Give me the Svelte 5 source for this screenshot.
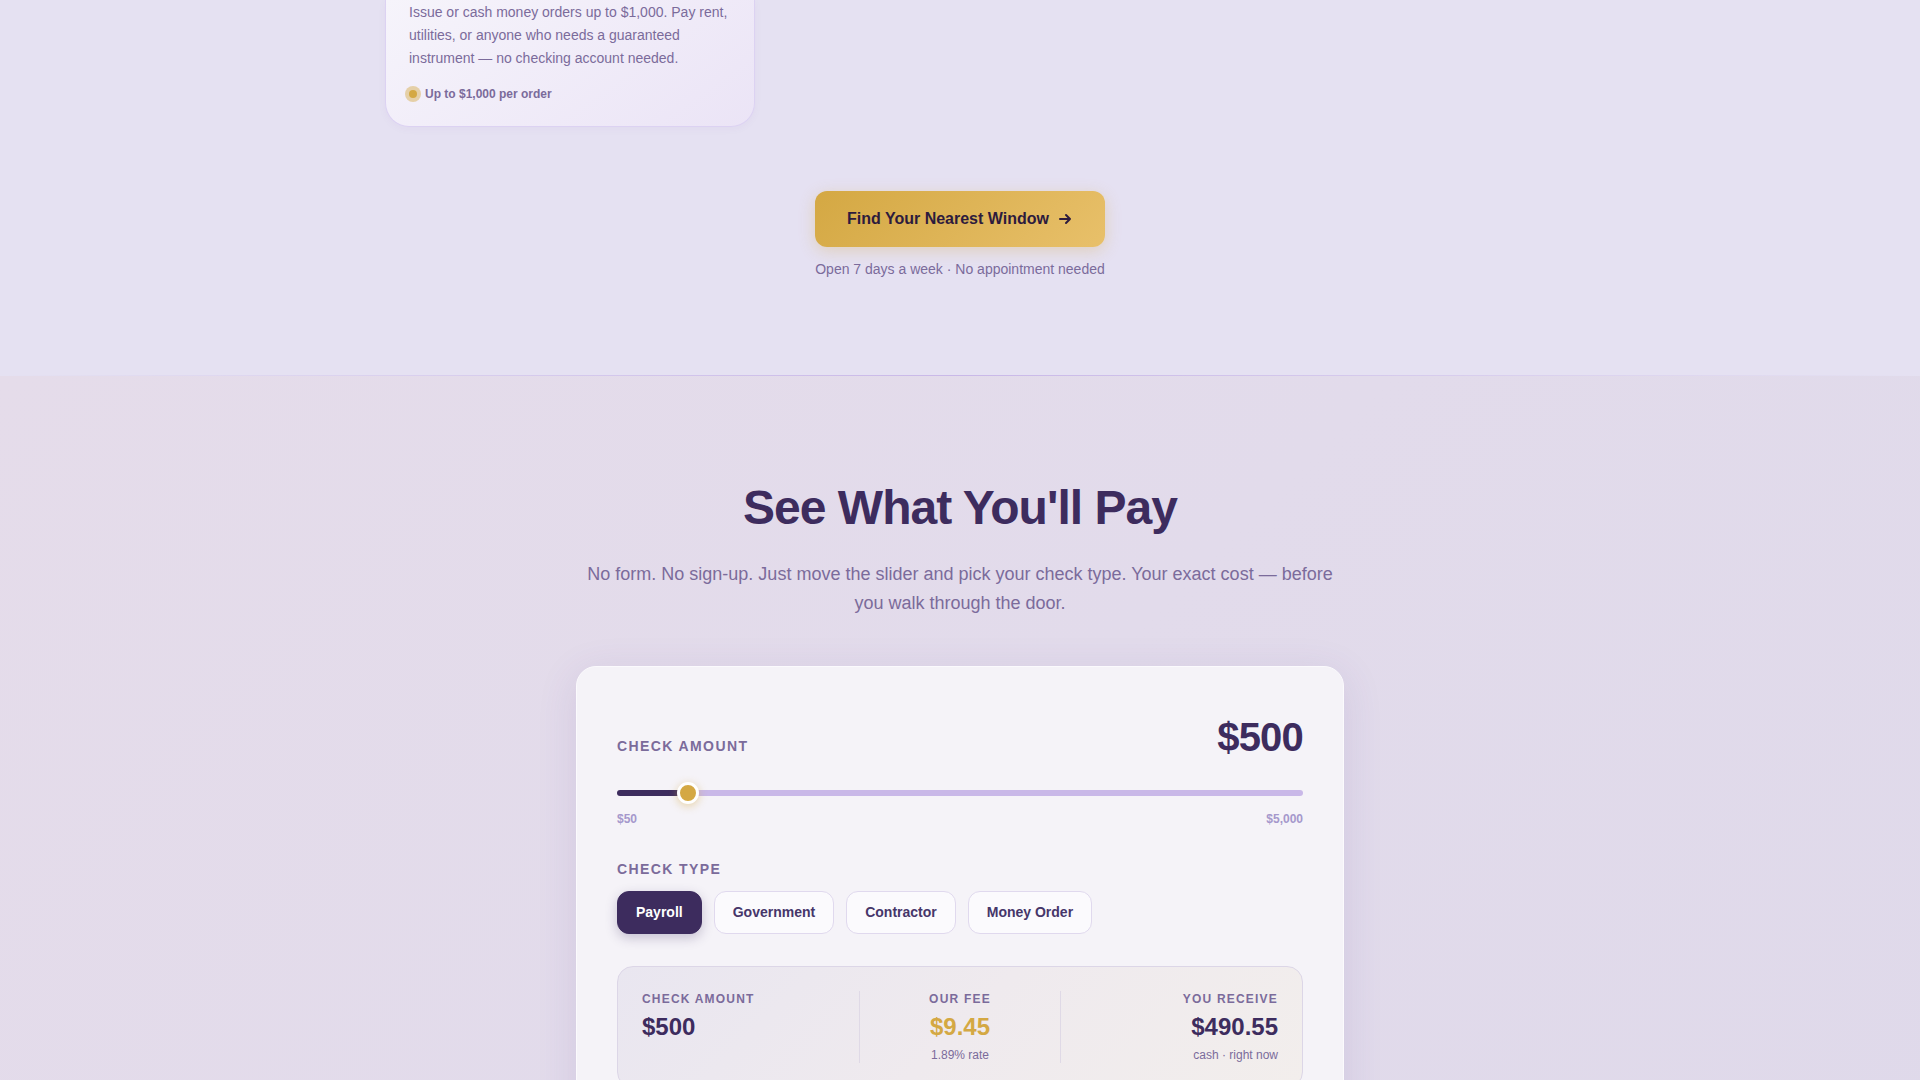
<script lang="ts">
	const MIN = 50;
	const MAX = 5000;

	const checkTypes = [
		{ name: "Payroll", rate: 1.89 },
		{ name: "Government", rate: 1.89 },
		{ name: "Contractor", rate: 2.49 },
		{ name: "Money Order", rate: 2.99 },
	];

	let amount = $state(500);
	let selected = $state(checkTypes[0]);

	let fee = $derived((amount * selected.rate) / 100);
	let percent = $derived(((amount - MIN) / (MAX - MIN)) * 100);

	function money(value: number, digits = 0) {
		return "$" + value.toLocaleString("en-US", { minimumFractionDigits: digits, maximumFractionDigits: digits });
	}
</script>

<div class="page">
	<section class="services">
		<div class="service-grid">
			<article class="service-card">
				<p>
					Issue or cash money orders up to $1,000. Pay rent, utilities, or anyone who needs a guaranteed instrument — no
					checking account needed.
				</p>
				<div class="service-tag"><span class="dot"></span>Up to $1,000 per order</div>
			</article>
		</div>

		<div class="cta">
			<a class="cta-btn" href="#locations">
				Find Your Nearest Window
				<svg width="16" height="16" viewBox="0 0 16 16" fill="none" aria-hidden="true">
					<path d="M3 8h10M9 4l4 4-4 4" stroke="currentColor" stroke-width="2" stroke-linecap="round" stroke-linejoin="round" />
				</svg>
			</a>
			<p class="cta-note">Open 7 days a week · No appointment needed</p>
		</div>
	</section>

	<div class="divider"></div>

	<section class="calculator">
		<header class="intro">
			<h2>See What You'll Pay</h2>
			<p>No form. No sign-up. Just move the slider and pick your check type. Your exact cost — before you walk through the door.</p>
		</header>

		<div class="calc-card">
			<div class="amount-row">
				<label class="field-label" for="amount">Check Amount</label>
				<output class="amount" for="amount">{money(amount)}</output>
			</div>
			<input id="amount" class="slider" type="range" min={MIN} max={MAX} step="10" bind:value={amount} style="--fill: {percent}%" />
			<div class="range-labels">
				<span>{money(MIN)}</span>
				<span>{money(MAX)}</span>
			</div>

			<div class="field-label type-label" id="type-label">Check Type</div>
			<div class="types" role="group" aria-labelledby="type-label">
				{#each checkTypes as type}
					<button
						type="button"
						class="type-btn"
						class:active={selected.name === type.name}
						aria-pressed={selected.name === type.name}
						onclick={() => (selected = type)}
					>
						{type.name}
					</button>
				{/each}
			</div>

			<div class="result">
				<div class="result-col">
					<span class="result-label">Check Amount</span>
					<span class="result-value">{money(amount)}</span>
				</div>
				<div class="result-col middle">
					<span class="result-label">Our Fee</span>
					<span class="result-value gold">{money(fee, 2)}</span>
					<span class="result-sub">{selected.rate}% rate</span>
				</div>
				<div class="result-col last">
					<span class="result-label">You Receive</span>
					<span class="result-value">{money(amount - fee, 2)}</span>
					<span class="result-sub">cash · right now</span>
				</div>
			</div>
		</div>
	</section>
</div>

<style>
	:global(body) {
		margin: 0;
		background: #e5e1f2;
	}

	.page {
		--ink: #3d2c5e;
		--muted: #7b6b9b;
		--lavender: #c9b8e8;
		--gold: #d4a843;
		height: 100vh;
		overflow: hidden;
		font-family: "Liberation Sans", Arial, sans-serif;
		color: var(--ink);
	}

	p,
	h2 {
		margin: 0;
	}

	.services {
		padding: 0 24px 96px;
	}

	.service-grid {
		display: grid;
		grid-template-columns: repeat(3, 1fr);
		gap: 20px;
		max-width: 1150px;
		margin: 0 auto;
	}

	.service-card {
		box-sizing: border-box;
		padding: 1px 23px 23px;
		border: 1px solid #dcd2f2;
		border-top: 0;
		border-radius: 0 0 24px 24px;
		background: linear-gradient(145deg, #f6f4fb, #ebe4f6);
		box-shadow: 0 2px 8px rgba(90, 60, 160, 0.04);
	}

	.service-card p {
		font-size: 14px;
		line-height: 23px;
		color: var(--muted);
	}

	.service-tag {
		display: flex;
		align-items: center;
		gap: 8px;
		margin-top: 15px;
		font-size: 12px;
		line-height: 18px;
		font-weight: 700;
		color: var(--muted);
	}

	.dot {
		width: 8px;
		height: 8px;
		border-radius: 50%;
		background: var(--gold);
		box-shadow: 0 0 0 4px rgba(212, 168, 67, 0.45);
	}

	.cta {
		display: flex;
		flex-direction: column;
		align-items: center;
		margin-top: 64px;
	}

	.cta-btn {
		display: flex;
		align-items: center;
		gap: 8px;
		padding: 16px 32px;
		border-radius: 12px;
		background: linear-gradient(135deg, #d4a843, #e8c06a);
		box-shadow: 0 4px 16px rgba(212, 168, 67, 0.3);
		font-size: 16px;
		line-height: 24px;
		font-weight: 700;
		color: #2d1b3d;
		text-decoration: none;
	}

	.cta-note {
		margin-top: 12px;
		font-size: 14px;
		line-height: 20px;
		color: var(--muted);
	}

	.divider {
		height: 1px;
		background: linear-gradient(90deg, transparent, var(--lavender), transparent);
	}

	.calculator {
		padding: 0 24px 96px;
		background: linear-gradient(135deg, #e5dcea 0%, #e2dbeb 50%, #dfd9ea 100%);
	}

	.intro {
		max-width: 768px;
		margin: 0 auto 48px;
		padding-top: 104px;
		text-align: center;
	}

	.intro h2 {
		font-size: 48px;
		line-height: 56px;
		letter-spacing: -0.02em;
	}

	.intro p {
		margin-top: 24px;
		font-size: 18px;
		line-height: 29px;
		color: var(--muted);
	}

	.calc-card {
		box-sizing: border-box;
		max-width: 768px;
		margin: 0 auto;
		padding: 40px;
		border: 1px solid #fbfafd;
		border-radius: 20px;
		background: #f5f3f8;
		box-shadow: 0 8px 40px rgba(90, 60, 150, 0.12);
	}

	.amount-row {
		display: flex;
		align-items: baseline;
		justify-content: space-between;
	}

	.field-label {
		font-size: 14px;
		line-height: 22px;
		font-weight: 700;
		letter-spacing: 0.1em;
		text-transform: uppercase;
		color: var(--muted);
	}

	.amount {
		font-size: 40px;
		line-height: 60px;
		font-weight: 700;
		letter-spacing: -0.02em;
	}

	.slider {
		appearance: none;
		display: block;
		width: 100%;
		height: 6px;
		margin: 23px 0 14px;
		border-radius: 3px;
		background: linear-gradient(90deg, var(--ink) var(--fill), var(--lavender) var(--fill));
		cursor: pointer;
	}

	.slider::-webkit-slider-thumb {
		appearance: none;
		box-sizing: border-box;
		width: 22px;
		height: 22px;
		border: 3px solid #fff;
		border-radius: 50%;
		background: var(--gold);
		box-shadow: 0 2px 8px rgba(212, 168, 67, 0.45);
	}

	.range-labels {
		display: flex;
		justify-content: space-between;
		font-size: 12px;
		line-height: 18px;
		font-weight: 700;
		color: #a598cc;
	}

	.type-label {
		margin-top: 30px;
	}

	.types {
		display: flex;
		flex-wrap: wrap;
		gap: 12px;
		margin-top: 11px;
	}

	.type-btn {
		padding: 10px 18px;
		border: 1px solid #e0d9ee;
		border-radius: 12px;
		background: #fbfafd;
		font: 700 14px/21px "Liberation Sans", Arial, sans-serif;
		color: #46366a;
		cursor: pointer;
	}

	.type-btn.active {
		border-color: var(--ink);
		background: var(--ink);
		box-shadow: 0 4px 12px rgba(61, 44, 94, 0.25);
		color: #fff;
	}

	.result {
		display: grid;
		grid-template-columns: 14fr 13fr 14fr;
		margin-top: 32px;
		padding: 24px;
		border: 1px solid #dcd6e7;
		border-radius: 16px;
		background: linear-gradient(135deg, #e9e6f0, #efeaee 50%, #f2eeec);
	}

	.result-col {
		display: flex;
		flex-direction: column;
		gap: 2px;
	}

	.result-col.middle {
		align-items: center;
		border: solid #dfd9e6;
		border-width: 0 1px;
	}

	.result-col.last {
		align-items: flex-end;
	}

	.result-label {
		font-size: 12px;
		line-height: 16px;
		font-weight: 700;
		letter-spacing: 0.1em;
		text-transform: uppercase;
		color: var(--muted);
	}

	.result-value {
		font-size: 24px;
		line-height: 36px;
		font-weight: 700;
	}

	.result-value.gold {
		color: var(--gold);
	}

	.result-sub {
		font-size: 12px;
		line-height: 16px;
		color: var(--muted);
	}
</style>
